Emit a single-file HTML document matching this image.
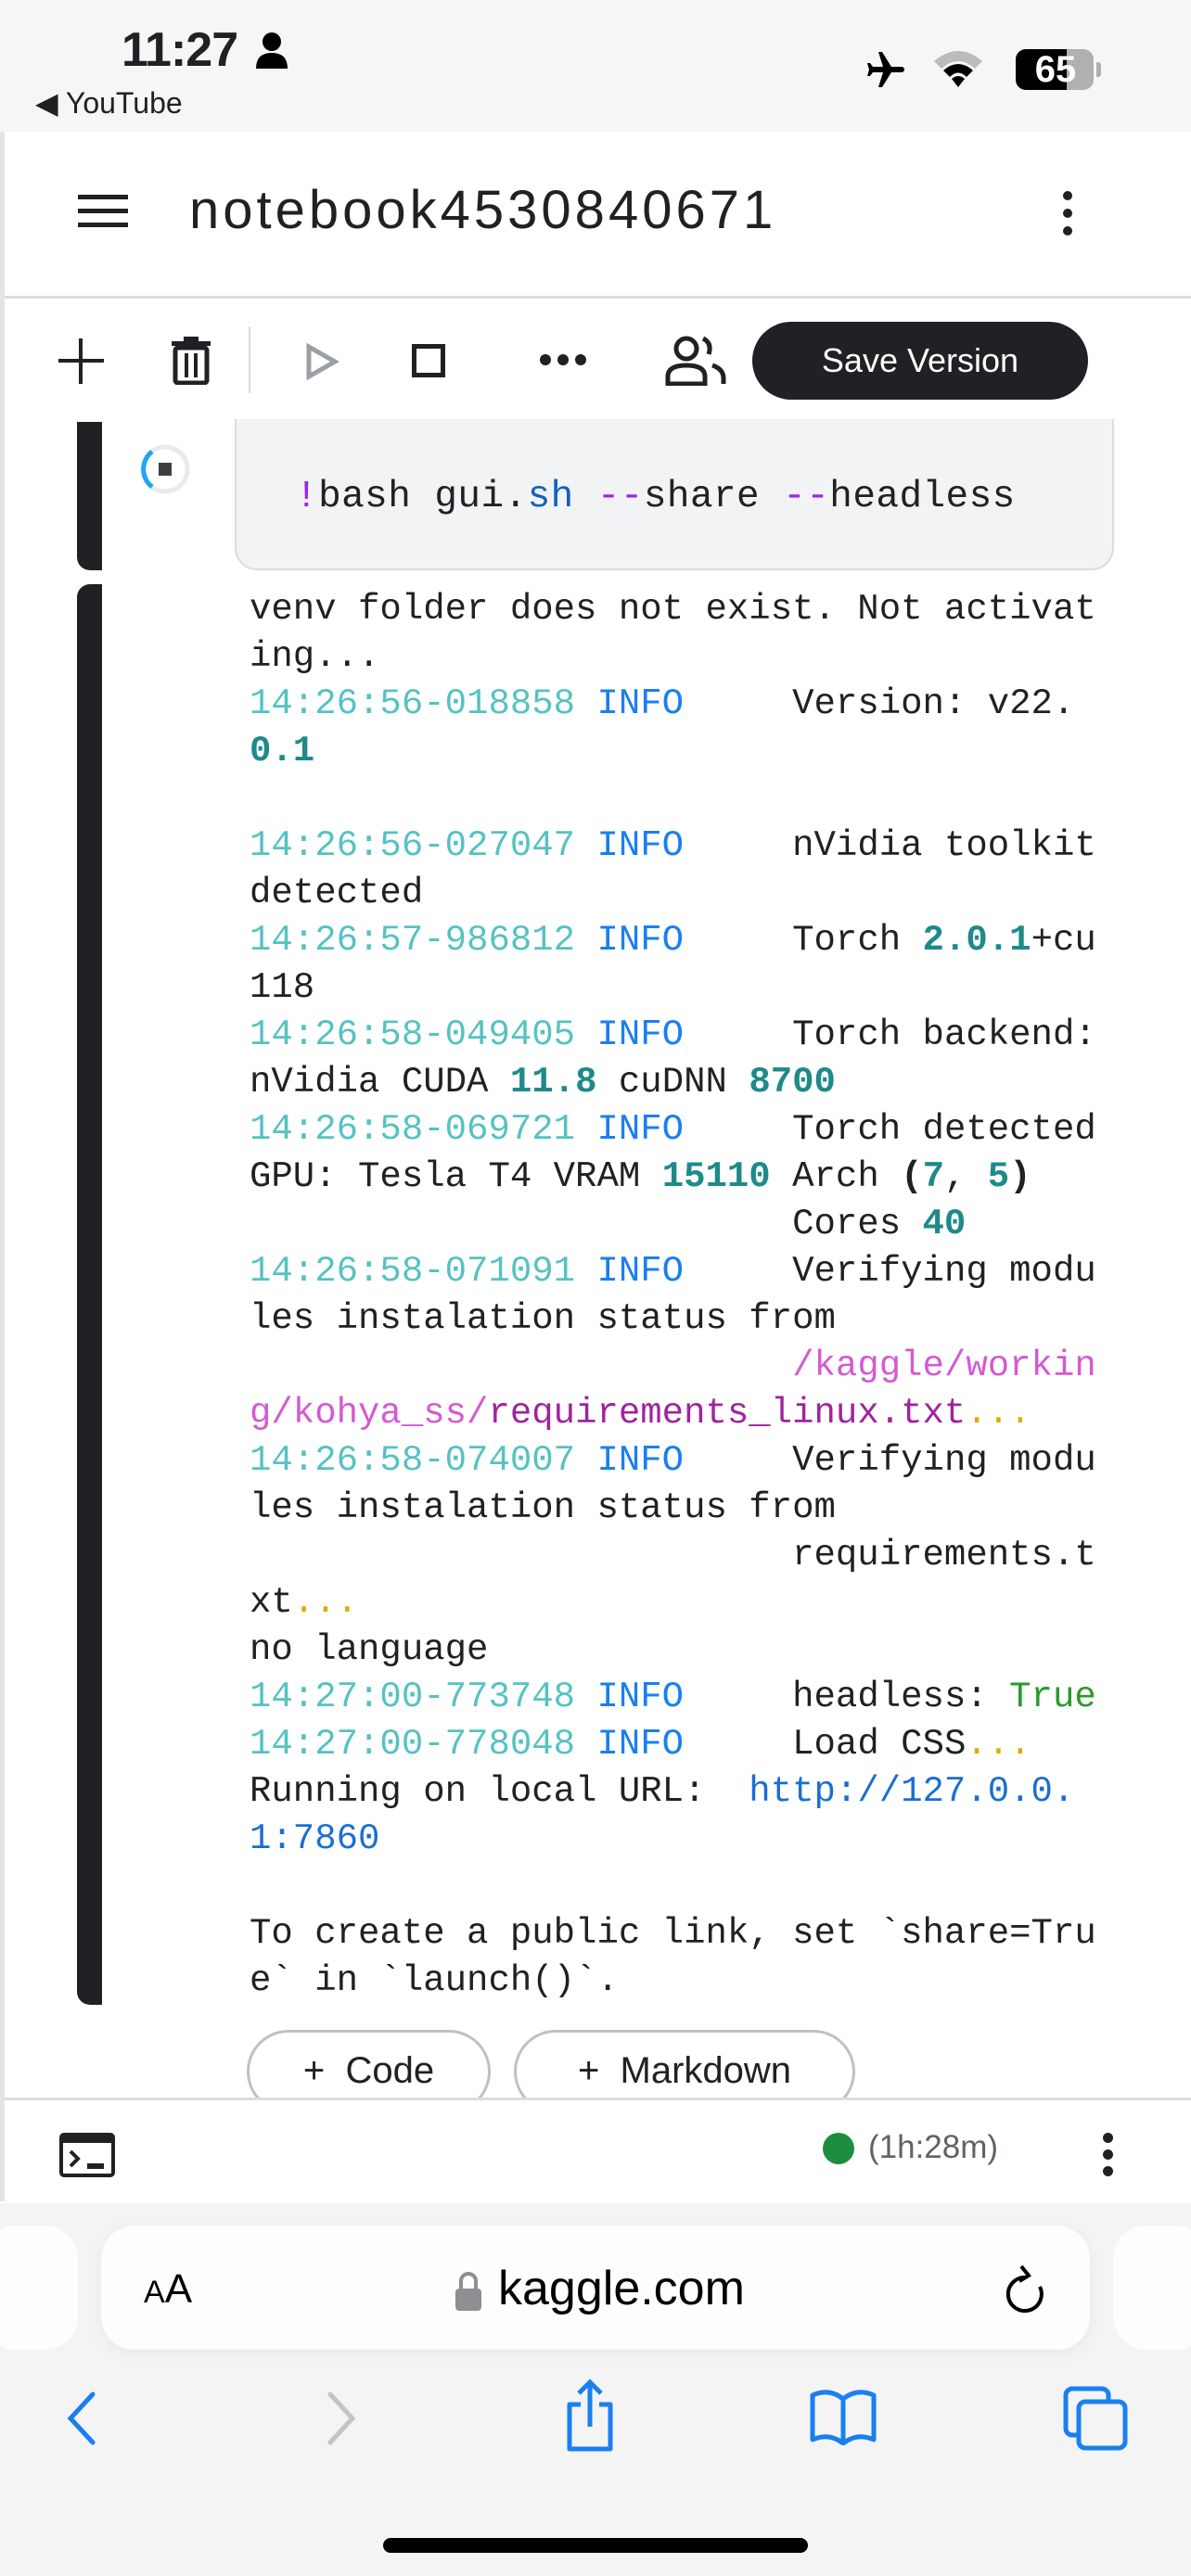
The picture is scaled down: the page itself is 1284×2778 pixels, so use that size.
<!DOCTYPE html>
<html><head><meta charset="utf-8"><style>
*{margin:0;padding:0;box-sizing:border-box}
body{width:1284px;height:2778px;position:relative;background:#fff;font-family:"Liberation Sans",sans-serif;overflow:hidden;color:#202124}
.a{position:absolute}
.out{position:absolute;left:269px;top:632px;font-family:"Liberation Mono",monospace;font-size:39px;line-height:51px;white-space:pre;color:#202124;letter-spacing:0}
.t{color:#56c2c2}.i{color:#1a7ff0}.n{color:#1e8a8a;font-weight:bold}.p{color:#d45ad2}.q{color:#a0239e}.y{color:#e0aa00}.g{color:#2a9a2a}.u{color:#1a6fd0}
</style></head><body>
<!-- status bar -->
<div class="a" style="left:0;top:0;width:1284px;height:142px;background:#f6f6f6"></div>
<div class="a" style="left:131px;top:24px;font-size:52px;font-weight:bold;letter-spacing:-1px">11:27</div>
<svg class="a" style="left:274px;top:34px" width="38" height="40" viewBox="0 0 38 40"><circle cx="19" cy="11" r="10" fill="#000"/><path d="M2 40 Q2 23 19 23 Q36 23 36 40Z" fill="#000"/></svg>
<div class="a" style="left:38px;top:92px;font-size:32px">◀ YouTube</div>
<svg class="a" style="left:930px;top:52px" width="50" height="48" viewBox="0 0 24 24"><path d="M21 16v-2l-8-5V3.5a1.5 1.5 0 0 0-3 0V9l-8 5v2l8-2.5V19l-2 1.5V22l3.5-1 3.5 1v-1.5L13 19v-5.5z" fill="#000" transform="rotate(90 12 12)"/></svg>
<svg class="a" style="left:1005px;top:52px" width="56" height="44" viewBox="0 0 56 44"><path d="M2 14 Q28 -8 54 14 L46 22 Q28 6 10 22Z" fill="#bbb"/><path d="M12 24 Q28 10 44 24 L37 31 Q28 22 19 31Z" fill="#000"/><path d="M21 33 Q28 27 35 33 L28 42Z" fill="#000"/></svg>
<div class="a" style="left:1095px;top:53px;width:84px;height:44px;border-radius:11px;background:#b0b0b0;overflow:hidden"><div style="width:55px;height:44px;background:#000"></div></div>
<div class="a" style="left:1182px;top:67px;width:5px;height:16px;background:#b0b0b0;border-radius:0 3px 3px 0"></div>
<div class="a" style="left:1100px;top:52px;width:76px;text-align:center;color:#fff;font-size:40px;font-weight:bold;line-height:46px">65</div>
<!-- page frame -->
<div class="a" style="left:0;top:142px;width:5px;height:2232px;background:#e4e4e7"></div>
<!-- header -->
<div class="a" style="left:84px;top:210px;width:54px;height:5px;background:#202124"></div>
<div class="a" style="left:84px;top:225px;width:54px;height:5px;background:#202124"></div>
<div class="a" style="left:84px;top:240px;width:54px;height:5px;background:#202124"></div>
<div class="a" style="left:204px;top:193px;font-size:58px;letter-spacing:4px;color:#202124">notebook4530840671</div>
<div class="a" style="left:1146px;top:206px;width:10px;height:10px;border-radius:5px;background:#202124;box-shadow:0 19px 0 #202124,0 38px 0 #202124"></div>
<div class="a" style="left:5px;top:319px;width:1279px;height:3px;background:#dadce0"></div>
<!-- toolbar -->
<div class="a" style="left:63px;top:387px;width:49px;height:4px;background:#202124"></div>
<div class="a" style="left:85px;top:365px;width:4px;height:49px;background:#202124"></div>
<svg class="a" style="left:181px;top:363px" width="50" height="52" viewBox="0 0 50 52"><rect x="4" y="5" width="42" height="5" fill="#202124"/><rect x="17" y="0" width="16" height="6" fill="#202124"/><rect x="8" y="12" width="34" height="38" rx="3" fill="none" stroke="#202124" stroke-width="5"/><rect x="18" y="18" width="4" height="26" fill="#202124"/><rect x="28" y="18" width="4" height="26" fill="#202124"/></svg>
<div class="a" style="left:268px;top:352px;width:2px;height:72px;background:#dadce0"></div>
<svg class="a" style="left:329px;top:370px" width="36" height="40" viewBox="0 0 36 40"><path d="M4 4 L32 20 L4 36Z" fill="none" stroke="#9aa0a6" stroke-width="5"/></svg>
<div class="a" style="left:444px;top:371px;width:36px;height:36px;border:5px solid #202124"></div>
<div class="a" style="left:582px;top:382px;width:12px;height:12px;border-radius:6px;background:#202124;box-shadow:19px 0 0 #202124,38px 0 0 #202124"></div>
<svg class="a" style="left:716px;top:360px" width="68" height="56" viewBox="0 0 68 56"><circle cx="24" cy="16" r="11" fill="none" stroke="#202124" stroke-width="5"/><path d="M4 54 V46 Q4 34 24 34 Q44 34 44 46 V54 Z" fill="none" stroke="#202124" stroke-width="5"/><path d="M42 5 Q52 10 48 22 M52 34 Q64 38 64 48 V54" fill="none" stroke="#202124" stroke-width="5"/></svg>
<div class="a" style="left:811px;top:347px;width:362px;height:84px;border-radius:42px;background:#202124;color:#fff;font-size:36px;text-align:center;line-height:84px">Save Version</div>
<!-- code cell -->
<div class="a" style="left:83px;top:455px;width:27px;height:160px;background:#202124;border-radius:0 0 0 14px"></div>
<svg class="a" style="left:150px;top:478px" width="56" height="56" viewBox="0 0 56 56"><circle cx="28" cy="28" r="24" fill="none" stroke="#e8eaed" stroke-width="5"/><path d="M14 9 A24 24 0 0 0 14 47" fill="none" stroke="#20a4f3" stroke-width="5"/><rect x="21" y="21" width="14" height="14" fill="#3c4043"/></svg>
<div class="a" style="left:253px;top:452px;width:948px;height:163px;background:#f1f3f4;border:2px solid #dadce0;border-top:none;border-radius:0 0 24px 24px"></div>
<div class="a" style="left:318px;top:513px;font-family:'Liberation Mono',monospace;font-size:41px;letter-spacing:0.45px;white-space:pre;color:#202124"><span style="color:#a020f0">!</span>bash gui.<span style="color:#1560bd">sh</span> <span style="color:#a020f0">--</span>share <span style="color:#a020f0">--</span>headless</div>
<!-- output cell -->
<div class="a" style="left:83px;top:630px;width:27px;height:1532px;background:#202124;border-radius:14px 0 0 14px"></div>
<div class="out">venv folder does not exist. Not activat
ing...
<span class="t">14:26:56-018858</span> <span class="i">INFO</span>     Version: v22.
<span class="n">0.1</span>

<span class="t">14:26:56-027047</span> <span class="i">INFO</span>     nVidia toolkit
detected
<span class="t">14:26:57-986812</span> <span class="i">INFO</span>     Torch <span class="n">2.0.1</span>+cu
118
<span class="t">14:26:58-049405</span> <span class="i">INFO</span>     Torch backend:
nVidia CUDA <span class="n">11.8</span> cuDNN <span class="n">8700</span>
<span class="t">14:26:58-069721</span> <span class="i">INFO</span>     Torch detected
GPU: Tesla T4 VRAM <span class="n">15110</span> Arch <b>(</b><span class="n">7</span>, <span class="n">5</span><b>)</b>
                         Cores <span class="n">40</span>
<span class="t">14:26:58-071091</span> <span class="i">INFO</span>     Verifying modu
les instalation status from
                         <span class="p">/kaggle/workin</span>
<span class="p">g/kohya_ss/</span><span class="q">requirements_linux.txt</span><span class="y">...</span>
<span class="t">14:26:58-074007</span> <span class="i">INFO</span>     Verifying modu
les instalation status from
                         requirements.t
xt<span class="y">...</span>
no language
<span class="t">14:27:00-773748</span> <span class="i">INFO</span>     headless: <span class="g">True</span>
<span class="t">14:27:00-778048</span> <span class="i">INFO</span>     Load CSS<span class="y">...</span>
Running on local URL:  <span class="u">http://127.0.0.</span>
<span class="u">1:7860</span>

To create a public link, set `share=Tru
e` in `launch()`.</div>
<!-- add buttons -->
<div class="a" style="left:266px;top:2189px;width:263px;height:90px;border:3px solid #bdc1c6;border-radius:45px;font-size:40px;line-height:82px;text-align:center">+&nbsp; Code</div>
<div class="a" style="left:554px;top:2189px;width:368px;height:90px;border:3px solid #bdc1c6;border-radius:45px;font-size:40px;line-height:82px;text-align:center">+&nbsp; Markdown</div>
<!-- bottom bar -->
<div class="a" style="left:5px;top:2262px;width:1279px;height:112px;background:#fff;border-top:3px solid #dadce0"></div>
<svg class="a" style="left:64px;top:2300px" width="60" height="48" viewBox="0 0 60 48"><rect x="2" y="2" width="56" height="44" rx="3" fill="none" stroke="#202124" stroke-width="4"/><rect x="2" y="2" width="56" height="9" fill="#202124"/><path d="M12 20 L20 28 L12 36" fill="none" stroke="#202124" stroke-width="4"/><rect x="30" y="33" width="18" height="6" fill="#202124"/></svg>
<div class="a" style="left:887px;top:2300px;width:34px;height:34px;border-radius:17px;background:#1e8e3e"></div>
<div class="a" style="left:936px;top:2296px;font-size:35px;color:#5f6368">(1h:28m)</div>
<div class="a" style="left:1189px;top:2300px;width:11px;height:11px;border-radius:6px;background:#202124;box-shadow:0 18px 0 #202124,0 36px 0 #202124"></div>
<!-- safari -->
<div class="a" style="left:0;top:2376px;width:1284px;height:402px;background:#f4f4f4"></div>
<div class="a" style="left:-20px;top:2400px;width:104px;height:134px;background:#fdfdfd;border-radius:36px"></div>
<div class="a" style="left:1200px;top:2400px;width:104px;height:134px;background:#fdfdfd;border-radius:36px"></div>
<div class="a" style="left:109px;top:2400px;width:1066px;height:134px;background:#fdfdfd;border-radius:36px;box-shadow:0 4px 20px rgba(0,0,0,0.05)"></div>
<div class="a" style="left:155px;top:2444px;font-size:44px;color:#000"><span style="font-size:34px">A</span>A</div>
<svg class="a" style="left:490px;top:2448px" width="30" height="46" viewBox="0 0 30 46"><path d="M7 20 V12 A8 8 0 0 1 23 12 V20" fill="none" stroke="#8e8e93" stroke-width="4"/><rect x="1" y="20" width="28" height="24" rx="4" fill="#8e8e93"/></svg>
<div class="a" style="left:537px;top:2438px;font-size:52px;color:#000">kaggle.com</div>
<svg class="a" style="left:1083px;top:2438px" width="48" height="62" viewBox="0 0 48 62"><path d="M22 18 A18 18 0 1 0 38 28" fill="none" stroke="#000" stroke-width="4"/><path d="M18 6 L26 16 L16 22" fill="none" stroke="#000" stroke-width="4"/></svg>
<svg class="a" style="left:68px;top:2578px" width="40" height="60" viewBox="0 0 40 60"><path d="M32 4 L8 30 L32 56" fill="none" stroke="#1a7ff0" stroke-width="5" stroke-linecap="round"/></svg>
<svg class="a" style="left:348px;top:2578px" width="40" height="60" viewBox="0 0 40 60"><path d="M8 4 L32 30 L8 56" fill="none" stroke="#c4c4c4" stroke-width="5" stroke-linecap="round"/></svg>
<svg class="a" style="left:606px;top:2565px" width="60" height="80" viewBox="0 0 60 80"><path d="M20 28 H8 V76 H52 V28 H40" fill="none" stroke="#1a7ff0" stroke-width="5" stroke-linejoin="round"/><path d="M30 4 V52 M18 16 L30 4 L42 16" fill="none" stroke="#1a7ff0" stroke-width="5"/></svg>
<svg class="a" style="left:872px;top:2575px" width="74" height="62" viewBox="0 0 74 62"><path d="M37 12 Q22 0 4 8 V56 Q22 48 37 60 Q52 48 70 56 V8 Q52 0 37 12 Z M37 12 V60" fill="none" stroke="#1a7ff0" stroke-width="5" stroke-linejoin="round"/></svg>
<svg class="a" style="left:1146px;top:2573px" width="70" height="70" viewBox="0 0 70 70"><rect x="3" y="3" width="46" height="50" rx="7" fill="none" stroke="#1a7ff0" stroke-width="5"/><rect x="17" y="17" width="50" height="50" rx="7" fill="#f4f4f4" stroke="#1a7ff0" stroke-width="5"/></svg>
<div class="a" style="left:413px;top:2737px;width:458px;height:16px;border-radius:8px;background:#000"></div>
</body></html>
